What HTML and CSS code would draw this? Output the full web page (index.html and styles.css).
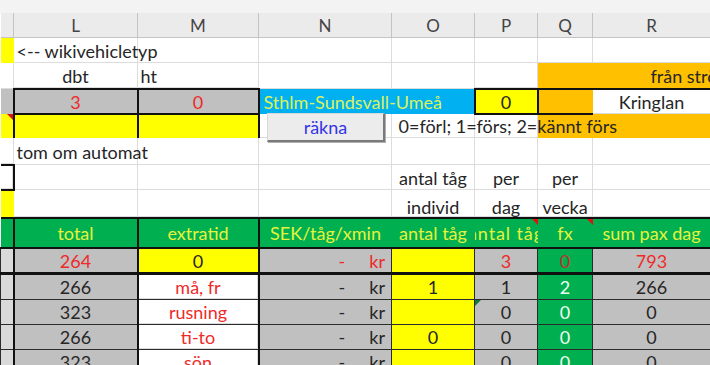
FILE: index.html
```html
<!DOCTYPE html>
<html lang="sv">
<head>
  <meta charset="UTF-8">
  <title>Tågkalkyl</title>
  <link rel="stylesheet" href="styles.css">
</head>
<body>

<div class="topbar"></div>

<div class="wrap">
  <table class="sheet">
    <colgroup>
      <col class="w-k"><col class="w-l"><col class="w-m"><col class="w-n">
      <col class="w-o"><col class="w-p"><col class="w-q"><col class="w-r">
    </colgroup>

    <tr class="colhead">
      <th></th><th>L</th><th>M</th><th>N</th><th>O</th><th>P</th><th>Q</th><th>R</th>
    </tr>

    <tr class="h25">
      <td class="yel"></td>
      <td>&lt;-- wikivehicletyp</td>
      <td></td><td></td><td></td><td></td><td></td><td></td>
    </tr>

    <tr class="h25">
      <td></td>
      <td class="c">dbt</td>
      <td>ht</td>
      <td></td><td></td><td></td>
      <td class="org"></td>
      <td class="org from">från strömmen</td>
    </tr>

    <tr class="h23">
      <td class="gray"></td>
      <td class="gray c red bt bb bl br">3</td>
      <td class="gray c red bt bb bl br">0</td>
      <td class="cyan route">Sthlm-Sundsvall-Umeå</td>
      <td class="cyan"></td>
      <td class="yel c bt bb bl br">0</td>
      <td class="org bt bb bl"></td>
      <td class="c bt">Kringlan</td>
    </tr>

    <tr class="h23">
      <td class="yel note"></td>
      <td class="yel bl br"></td>
      <td class="yel bl br"></td>
      <td></td>
      <td class="legend">0=förl; 1=förs; 2=kännt förs</td>
      <td></td>
      <td class="org"></td>
      <td class="org"></td>
    </tr>

    <tr class="h26">
      <td></td>
      <td>tom om automat</td>
      <td></td><td></td><td></td><td></td><td></td><td></td>
    </tr>

    <tr class="h23">
      <td class="bt bb br"></td>
      <td></td><td></td><td></td>
      <td class="c">antal tåg</td>
      <td class="c">per</td>
      <td class="c">per</td>
      <td></td>
    </tr>

    <tr class="h26 low">
      <td class="yel"></td>
      <td></td><td></td><td></td>
      <td class="c">individ</td>
      <td class="c">dag</td>
      <td class="c">vecka</td>
      <td></td>
    </tr>

    <tr class="h28 head">
      <td class="grn br"></td>
      <td class="grn c br">total</td>
      <td class="grn c br">extratid</td>
      <td class="grn c">SEK/tåg/xmin</td>
      <td class="grn c">antal tåg</td>
      <td class="grn note"><div class="clip"><span>antal tåg</span></div></td>
      <td class="grn c note">fx</td>
      <td class="grn c">sum pax dag</td>
    </tr>

    <tr class="h23 data sum">
      <td class="lgray br"></td>
      <td class="gray c red br">264</td>
      <td class="yel c br">0</td>
      <td class="gray acct red"><span class="dash">-</span>kr</td>
      <td class="yel"></td>
      <td class="gray c red">3</td>
      <td class="grn c dred">0</td>
      <td class="gray c red">793</td>
    </tr>

    <tr class="h24 data">
      <td class="lgray br"></td>
      <td class="gray c br">266</td>
      <td class="c red br">må, fr</td>
      <td class="gray acct"><span class="dash">-</span>kr</td>
      <td class="yel c">1</td>
      <td class="gray c">1</td>
      <td class="grn c wht">2</td>
      <td class="gray c">266</td>
    </tr>

    <tr class="h24 data">
      <td class="lgray br"></td>
      <td class="gray c br">323</td>
      <td class="c red br">rusning</td>
      <td class="gray acct"><span class="dash">-</span>kr</td>
      <td class="yel"></td>
      <td class="gray c gnote">0</td>
      <td class="grn c wht">0</td>
      <td class="gray c">0</td>
    </tr>

    <tr class="h24 data">
      <td class="lgray br"></td>
      <td class="gray c br">266</td>
      <td class="c red br">ti-to</td>
      <td class="gray acct"><span class="dash">-</span>kr</td>
      <td class="yel c">0</td>
      <td class="gray c">0</td>
      <td class="grn c wht">0</td>
      <td class="gray c">0</td>
    </tr>

    <tr class="h24 data">
      <td class="lgray br"></td>
      <td class="gray c br">323</td>
      <td class="c red br">sön</td>
      <td class="gray acct"><span class="dash">-</span>kr</td>
      <td class="yel"></td>
      <td class="gray c">0</td>
      <td class="grn c wht">0</td>
      <td class="gray c">0</td>
    </tr>
  </table>

  <button class="calc">räkna</button>
</div>

</body>
</html>
```

FILE: styles.css
```css
body {
  margin: 0;
  font-family: Lato, "Liberation Sans", sans-serif;
  font-size: 18px;
  color: #262626;
  background: #fff;
  overflow: hidden;
}
.topbar {
  height: 13px;
  background: #f3f3f3;
}
.wrap {
  position: relative;
}

/* sheet grid */
.sheet {
  border-collapse: collapse;
  table-layout: fixed;
  width: 710px;
}
.w-k { width: 13px; }
.w-l { width: 124px; }
.w-m { width: 121px; }
.w-n { width: 133px; }
.w-o { width: 83px; }
.w-p { width: 63px; }
.w-q { width: 55px; }
.w-r { width: 118px; }

.sheet td, .sheet th {
  padding: 0 3px;
  line-height: 20px;
  white-space: nowrap;
  overflow: visible;
  box-shadow: inset -1px -1px 0 #dcdcdc;
}
.colhead th {
  height: 25px;
  background: #ebebeb;
  font-weight: normal;
  font-size: 17px;
  color: #444;
  text-align: center;
  box-shadow: inset -1px -1px 0 #c4c4c4;
}
.h23 td { height: 23px; }
.h24 td { height: 24px; }
.h25 td { height: 25px; }
.h26 td { height: 26px; }
.h28 td { height: 28px; }
.low td { vertical-align: bottom; }

.c { text-align: center; }
.red { color: #ee2a2a; }
.dred { color: #c2302a; }
.wht { color: #effff2; }

/* fills hide the gridlines */
.yel, .gray, .lgray, .grn, .org, .cyan { box-shadow: none !important; }
.yel { background: #ffff00; }
.gray { background: #c0c0c0; }
.lgray { background: #d9d9d9; }
.grn { background: #00b050; }
.org { background: #ffc000; }
.cyan { background: #00b0f0; }

.bt { border-top: 2px solid #111; }
.bb { border-bottom: 2px solid #111; }
.bl { border-left: 2px solid #111; }
.br { border-right: 2px solid #111; }

.sheet .route { color: #dcf25a; padding-left: 4px; }
.sheet .from { padding-left: 58px; overflow: hidden; }
.sheet .legend { padding-left: 7px; }

/* header band */
.head td {
  border-top: 2px solid #111;
  border-bottom: 2px solid #111;
  color: #e6f23c;
}
.head .br { border-right: 2px solid #111; }
.clip {
  display: flex;
  justify-content: center;
  overflow: hidden;
  margin: 0 -3px;
}
.clip span {
  flex: none;
  width: 80px;
  text-align: center;
  letter-spacing: 0.9px;
}

/* data rows */
.data td { border: 1px solid #2b2b2b; }
.data .br { border-right: 2px solid #111; }
.sum td { border-bottom: 3px solid #111; }
.sheet .acct { text-align: right; padding-right: 6px; }
.dash { margin-right: 24px; }

/* comment markers */
.note, .gnote { position: relative; }
.note::after {
  content: "";
  position: absolute;
  top: 0;
  right: 0;
  border-top: 6px solid #e01010;
  border-left: 6px solid transparent;
}
.gnote::after {
  content: "";
  position: absolute;
  top: 0;
  left: 0;
  border-top: 6px solid #137a3a;
  border-right: 6px solid transparent;
}

/* macro button floating over the sheet */
.calc {
  position: absolute;
  left: 267px;
  top: 100px;
  width: 118px;
  height: 29px;
  padding: 0;
  font-family: Lato, "Liberation Sans", sans-serif;
  font-size: 18px;
  color: #3434e8;
  background: #ececec;
  border: 1px solid #d8d8d8;
  border-right: 2px solid #7a7a7a;
  border-bottom: 2px solid #7a7a7a;
  box-shadow: 1px 1px 0 #b0b0b0;
}
```
